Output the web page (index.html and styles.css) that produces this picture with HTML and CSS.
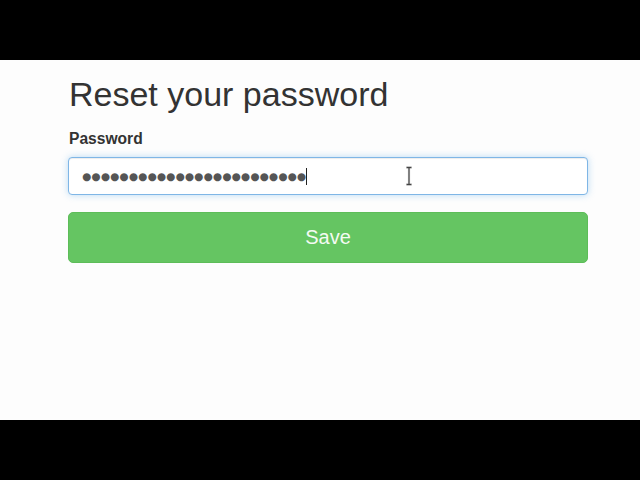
FILE: index.html
```html
<!DOCTYPE html>
<html>
<head>
<meta charset="utf-8">
<link rel="stylesheet" href="styles.css">
</head>
<body>
<div class="bar"></div>
<main class="page">
  <div class="container">
    <h1 class="title">Reset your password</h1>
    <form class="form">
      <label class="label">Password</label>
      <div class="field">
        <span class="dots">●●●●●●●●●●●●●●●●●●●●●●●●</span><span class="caret"></span>
        <svg class="ibeam" width="8" height="20" viewBox="0 0 8 20">
          <path d="M1 1.5h6M4 1.5v17M1 18.5h6" stroke="#f2f2f2" stroke-width="3" fill="none"/>
          <path d="M1.5 1.5h5M4 1.5v17M1.5 18.5h5" stroke="#444" stroke-width="1.3" fill="none"/>
        </svg>
      </div>
      <button type="button" class="btn">Save</button>
    </form>
  </div>
</main>
<div class="bar"></div>
</body>
</html>
```
FILE: styles.css
```css
html, body {
  margin: 0;
  padding: 0;
  background: #000;
}
body {
  font-family: "Liberation Sans", Arial, sans-serif;
  color: #333;
}
.bar {
  height: 60px;
  background: #000;
}
.page {
  height: 360px;
  background: #fdfdfd;
}
.container {
  padding: 0 52px 0 68px;
}
.title {
  margin: 0;
  padding-top: 14px;
  font-size: 34px;
  font-weight: 400;
  line-height: 40px;
  color: #333;
  padding-left: 1px;
}
.form {
  display: flex;
  flex-direction: column;
}
.label {
  margin-top: 15px;
  font-size: 15.6px;
  font-weight: 700;
  line-height: 20px;
  color: #333;
  padding-left: 1px;
}
.field {
  position: relative;
  margin-top: 8px;
  height: 36px;
  border: 1px solid #7fb6e6;
  border-radius: 4px;
  background: #fff;
  box-shadow: inset 0 1px 1px rgba(0,0,0,.075), 0 0 7px rgba(102,175,233,.45);
  display: flex;
  align-items: center;
  padding-left: 13px;
}
.dots {
  font-family: "DejaVu Sans", sans-serif;
  font-size: 10.5px;
  letter-spacing: 0.18px;
  color: #555;
  line-height: 1;
}
.caret {
  display: inline-block;
  width: 1px;
  height: 17px;
  background: #222;
  margin-left: 0;
}
.ibeam {
  position: absolute;
  left: 336px;
  top: 8px;
}
.btn {
  margin-top: 17px;
  height: 51px;
  border: 1px solid #5dbd59;
  border-radius: 5px;
  background: #65c562;
  color: #f4fbf3;
  font-family: "Liberation Sans", Arial, sans-serif;
  font-size: 20px;
  padding: 0;
}
```
